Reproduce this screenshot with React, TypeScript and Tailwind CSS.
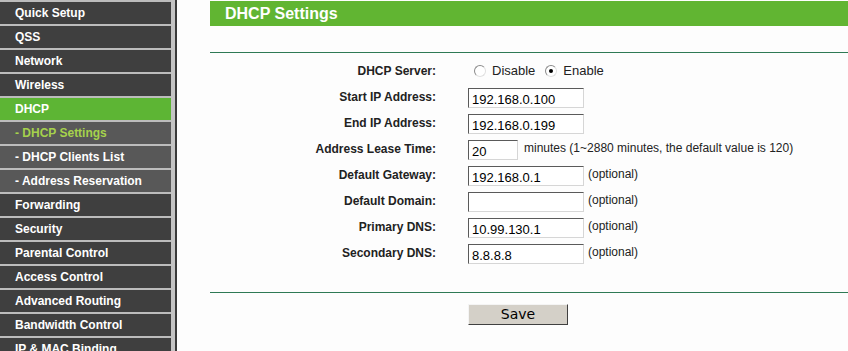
const menu = [
  { label: "Quick Setup" },
  { label: "QSS" },
  { label: "Network" },
  { label: "Wireless" },
  { label: "DHCP", active: true },
  { label: "- DHCP Settings", sub: true, active: true },
  { label: "- DHCP Clients List", sub: true },
  { label: "- Address Reservation", sub: true },
  { label: "Forwarding" },
  { label: "Security" },
  { label: "Parental Control" },
  { label: "Access Control" },
  { label: "Advanced Routing" },
  { label: "Bandwidth Control" },
  { label: "IP & MAC Binding" },
]

type Row = { label: string; value?: string; width?: string; note?: string }

const rows: Row[] = [
  { label: "Start IP Address:", value: "192.168.0.100" },
  { label: "End IP Address:", value: "192.168.0.199" },
  { label: "Address Lease Time:", value: "20", width: "w-[50px]", note: "minutes (1~2880 minutes, the default value is 120)" },
  { label: "Default Gateway:", value: "192.168.0.1", note: "(optional)" },
  { label: "Default Domain:", value: "", note: "(optional)" },
  { label: "Primary DNS:", value: "10.99.130.1", note: "(optional)" },
  { label: "Secondary DNS:", value: "8.8.8.8", note: "(optional)" },
]

function Radio({ checked }: { checked?: boolean }) {
  return (
    <span className="relative inline-block w-[12px] h-[12px] rounded-full border border-t-[#8a8a8a] border-l-[#8a8a8a] border-r-[#e0e0e0] border-b-[#e0e0e0] bg-white">
      {checked && <span className="absolute left-[3px] top-[3px] w-[4px] h-[4px] rounded-full bg-black" />}
    </span>
  )
}

export default function App() {
  return (
    <div className="flex w-[848px] h-[351px] overflow-hidden bg-[#fdfdfd] font-['Liberation_Sans',Arial,sans-serif]">
      {/* Sidebar */}
      <aside className="w-[171px] shrink-0 bg-[#bcbcbc] pt-[2px]">
        {menu.map((m) => (
          <div
            key={m.label}
            className={
              "h-[22px] mb-[2px] pl-[15px] flex items-center text-[12px] font-bold " +
              (m.sub
                ? m.active
                  ? "bg-[#585858] text-[#a6d24c]"
                  : "bg-[#585858] text-white"
                : m.active
                  ? "bg-[#5db534] text-white"
                  : "bg-[#3f3f3f] text-white")
            }
          >
            {m.label}
          </div>
        ))}
      </aside>
      <div className="w-[4px] shrink-0 bg-[#c4c4c4]" />
      <div className="w-[2px] shrink-0 bg-[#3a3a3a]" />

      {/* Content */}
      <main className="flex-1 pl-[33px] pt-[1px]">
        <div className="h-[25px] bg-[#61b532] pl-[15px] flex items-center text-white text-[16px] font-bold">
          DHCP Settings
        </div>
        <div className="mt-[26px] h-[1px] bg-[#2f7a55]" />

        <div className="mt-[5px] grid grid-cols-[226px_1fr] gap-x-[32px] text-[12px] text-[#222]">
          <div className="h-[26px] flex items-center justify-end font-bold">DHCP Server:</div>
          <div className="h-[26px] flex items-center text-[13px]">
            <span className="ml-[6px] mr-[6px] flex"><Radio /></span>
            <span>Disable</span>
            <span className="ml-[10px] mr-[6px] flex"><Radio checked /></span>
            <span>Enable</span>
          </div>
          {rows.map((r) => (
            <div key={r.label} className="contents">
              <div className="h-[26px] flex items-center justify-end font-bold">{r.label}</div>
              <div className="h-[26px] flex items-center">
                <div
                  className={
                    (r.width ?? "w-[116px]") +
                    " h-[20px] mt-[2px] bg-white border border-t-[#5a5a5a] border-l-[#5a5a5a] border-r-[#d6d6d6] border-b-[#d6d6d6] pl-[3px] flex items-center pt-[3px] text-[13px] text-black"
                  }
                >
                  {r.value}
                </div>
                {r.note && <span className={r.width ? "ml-[6px] -mt-[2px]" : "ml-[4px] -mt-[2px]"}>{r.note}</span>}
              </div>
            </div>
          ))}
        </div>

        <div className="mt-[26px] h-[1px] bg-[#2f7a55]" />
        <div className="mt-[9px] pl-[258px]">
          <button className="w-[100px] h-[21px] bg-[#d4d0c8] border border-t-[#f4f4f4] border-l-[#f4f4f4] border-r-[#404040] border-b-[#404040] text-[14px] text-black leading-none font-['DejaVu_Sans',sans-serif]">
            Save
          </button>
        </div>
      </main>
    </div>
  )
}
